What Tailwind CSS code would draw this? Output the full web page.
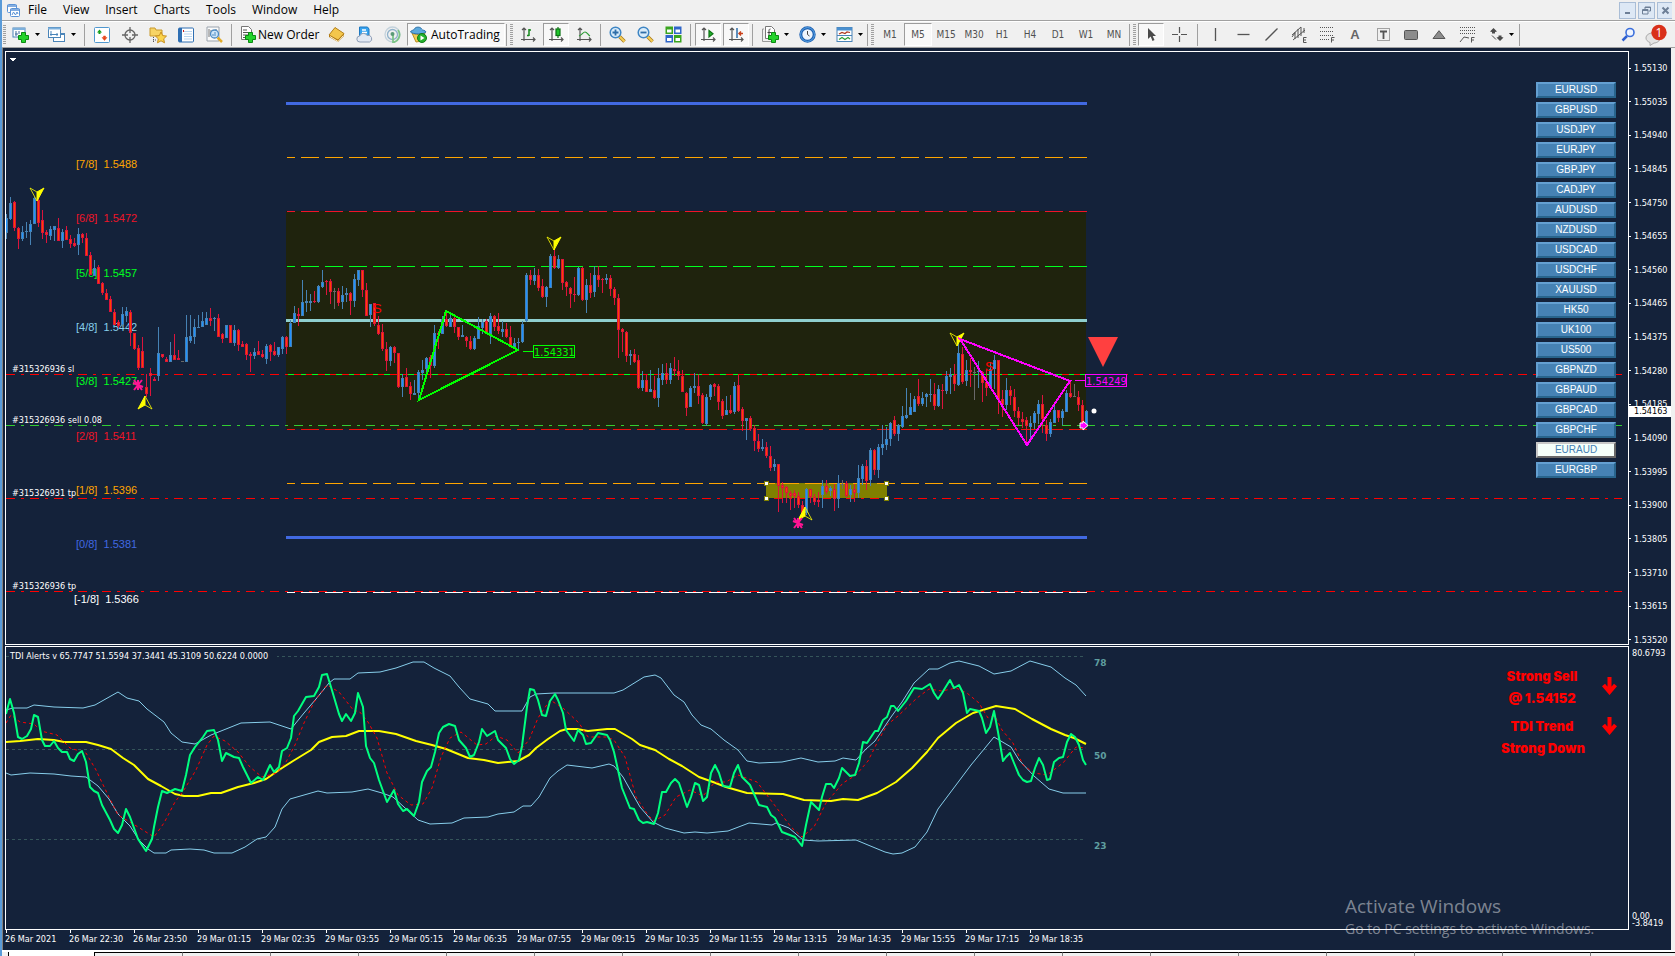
<!DOCTYPE html>
<html lang="en">
<head>
    <meta charset="UTF-8">
    <meta name="viewport" content="width=device-width, initial-scale=1.0">
    <title>EURAUD,M5</title>
    <script src="https://cdn.jsdelivr.net/npm/@tailwindcss/browser@4"></script>
</head>
<body class="h-screen overflow-hidden bg-[#f0f0f0] font-['Open_Sans',sans-serif] text-black">
<div class="flex h-full flex-col border-l-2 border-[#5a9bd8]">

    <!-- Menu bar -->
    <header class="flex h-[21px] shrink-0 items-center border-b border-[#a0a0a0] text-[12px] leading-[18px]">
        <svg class="ml-1 mr-[7px] size-[15px]" viewBox="0 0 15 15" fill="#fff" stroke="#5b93d6">
            <rect x="1.5" y="1.5" width="9" height="8" rx="1"/><rect x="4.5" y="5.5" width="9" height="8" rx="1"/>
            <path d="M1 3h10M4 7h10" stroke-width="1.6"/><path d="M6 12l1.500-3 2 3 1.500-3 1 2" fill="none"/>
        </svg>
        <nav class="flex gap-4">
            <button>File</button><button>View</button><button>Insert</button><button>Charts</button><button>Tools</button><button>Window</button><button>Help</button>
        </nav>
        <div class="ml-auto mr-[3px] flex gap-[2px]">
            <button aria-label="Minimize" class="flex h-[17px] w-[17px] items-center justify-center border border-[#a9bdd6] bg-[#dde8f5]"><svg class="size-[9px]" viewBox="0 0 9 9"><path d="M2 7h5" stroke="#6d7f96" stroke-width="2"/></svg></button>
            <button aria-label="Restore" class="flex h-[17px] w-[17px] items-center justify-center border border-[#a9bdd6] bg-[#dde8f5]"><svg class="size-[9px]" viewBox="0 0 9 9" fill="none" stroke="#6d7f96"><path d="M3 3V1h5.500v4H7M3 1.500h5.500"/><path d="M.5 3.500H6v4.500H.5zM.5 4.500H6"/></svg></button>
            <button aria-label="Close" class="flex h-[17px] w-[15px] items-center justify-center border border-r-0 border-[#a9bdd6] bg-[#dde8f5]"><svg class="size-[9px]" viewBox="0 0 9 9"><path d="M1.500 1.500l6 6M7.500 1.500l-6 6" stroke="#6d7f96" stroke-width="2"/></svg></button>
        </div>
    </header>

    <!-- Toolbar -->
    <div class="flex h-[27px] shrink-0 items-center border-t border-b border-t-white border-b-[#a0a0a0] text-[12px] [&>button]:flex [&>button]:h-[23px] [&>button]:shrink-0 [&>button]:items-center [&_svg]:shrink-0">
        <span class="w-[6px] shrink-0"><i class="ml-px block h-[20px] w-[3px] bg-[repeating-linear-gradient(#a0a0a0_0_1px,transparent_1px_2px)]"></i></span>
        <button aria-label="New chart" class="w-[36px] gap-[6px] pl-1">
            <svg class="size-[17px]" viewBox="0 0 17 17"><rect x="1" y="2" width="12" height="9" fill="#fff" stroke="#4a84b8"/><path d="M1 3h12" stroke="#7db0dc" stroke-width="2"/><path d="M4 5v5M6 8H3M7 5v3" stroke="#3f6d9a"/><path d="M9.500 6.500h4v3h3v4h-3v3h-4v-3h-3v-4h3z" fill="#23d32b" stroke="#0a8a12"/></svg>
            <svg class="h-[3px] w-[5px]" viewBox="0 0 5 3"><path d="M0 0h5L2.500 3z"/></svg>
        </button>
        <button aria-label="Profiles" class="w-[36px] gap-[6px] pl-1">
            <svg class="size-[17px]" viewBox="0 0 17 17" fill="#fff" stroke="#4a84b8"><rect x="5.500" y="7.500" width="11" height="8"/><path d="M5 8.500h11"/><rect x=".5" y="1.500" width="12" height="10"/><path d="M0 2.500h13" stroke="#7db0dc" stroke-width="2"/><path d="M3 5v5M2 8.500h8M9 7v3" fill="none"/></svg>
            <svg class="h-[3px] w-[5px]" viewBox="0 0 5 3"><path d="M0 0h5L2.500 3z"/></svg>
        </button>
        <span class="flex h-[22px] w-[8px] shrink-0 justify-center"><i class="w-px bg-[#a0a0a0]"></i></span>
        <button aria-label="Market Watch" class="w-[28px] justify-center"><svg class="size-[16px]" viewBox="0 0 16 16"><rect x=".5" y=".5" width="15" height="15" rx="1" fill="#fff" stroke="#4f97cf"/><path d="M5.500 2.500L8 5.500H6.500V7h-2V5.500H3z" fill="#17a01f"/><path d="M10.500 13.500L8 10.500h1.500V9h2v1.500H13z" fill="#e8481c" stroke="#e8481c" stroke-width=".5"/></svg></button>
        <button aria-label="Data Window" class="w-[28px] justify-center"><svg class="size-[16px]" viewBox="0 0 16 16" fill="none" stroke="#666" stroke-width="1.300"><circle cx="8" cy="8" r="5"/><path d="M8 0v6M8 10v6M0 8h6M10 8h6"/></svg></button>
        <button aria-label="Navigator" class="w-[28px] justify-center"><svg class="size-[18px]" viewBox="0 0 18 18"><path d="M1 2h5l1 2h6v6H1z" fill="#f7d465" stroke="#c99a2e"/><path d="M4.500 11v6M4 14h4" stroke="#555" stroke-dasharray="1 1"/><path d="M12 6l1.700 3.600 3.800.5-2.800 2.700.8 4-3.500-2-3.500 2 .8-4L6.500 10.100l3.800-.5z" fill="#fbd44c" stroke="#c88f1f"/></svg></button>
        <button aria-label="Terminal" class="w-[28px] justify-center"><svg class="size-[16px]" viewBox="0 0 16 16"><rect x=".5" y="1" width="15" height="14" rx="1" fill="#fff" stroke="#2f6fb3"/><path d="M2.500 1v14" stroke="#2f6fb3" stroke-width="3"/><path d="M6 4.500h8M6 7h8M6 9.500h8M6 12h8" stroke="#b9d5ef"/><path d="M5.500 3v2" stroke="#c22"/></svg></button>
        <button aria-label="Strategy Tester" class="w-[28px] justify-center"><svg class="size-[17px]" viewBox="0 0 17 17"><path d="M1 1h12v14H1z" fill="#fafafa" stroke="#9aa3ad"/><path d="M3 3v8M5 4v5M10 3v3" stroke="#777"/><path d="M11.500 11.500l4.500 4.500" stroke="#e0ab2b" stroke-width="2.500"/><circle cx="8.500" cy="8" r="4" fill="#cfe6f8" stroke="#4e8cc4" stroke-width="1.300"/><path d="M7 8v2M9 6v4" stroke="#4e8cc4"/></svg></button>
        <span class="flex h-[22px] w-[6px] shrink-0 justify-center"><i class="w-px bg-[#a0a0a0]"></i></span>
        <button class="w-[88px] gap-[2px] pl-[5px]">
            <svg class="size-[17px]" viewBox="0 0 17 17"><path d="M2.500.5h7l3 3v10h-10z" fill="#fff" stroke="#777"/><path d="M4 4h4M4 6.500h6M4 9h6M4 11.500h3" stroke="#555"/><path d="M9.500 6.500h4v3h3v4h-3v3h-4v-3h-3v-4h3z" fill="#23d32b" stroke="#0a8a12"/></svg>
            New Order
        </button>
        <button aria-label="MetaEditor" class="w-[28px] justify-center"><svg class="size-[17px]" viewBox="0 0 17 17"><path d="M1 9l6-7.500 9 6V10l-6 6-9-5z" fill="#b47a12"/><path d="M1 9l6-7.500 9 6-6 6.500z" fill="#f3c64c" stroke="#a97514" stroke-width=".8"/><path d="M2 10.500l8 5 5.500-6" fill="none" stroke="#fff3cf"/></svg></button>
        <button aria-label="Options" class="w-[28px] justify-center"><svg class="size-[17px]" viewBox="0 0 17 17"><path d="M3.500 1h8l1.500 2v8H3.500z" fill="#38a3ee" stroke="#1d78c1"/><path d="M6 4h4M6 6.500h5" stroke="#fff" stroke-width="1.400"/><path d="M4 16a3 3 0 01-.3-6A4 4 0 0111 9.500a3.200 3.200 0 012.500 6.500z" fill="#e3e9f3" stroke="#8e9db5"/></svg></button>
        <button aria-label="Signals" class="w-[28px] justify-center"><svg class="size-[17px]" viewBox="0 0 17 17" fill="none"><circle cx="8.500" cy="8.500" r="7.500" stroke="#c3d2dc" stroke-width="1.300"/><circle cx="8.500" cy="8.500" r="5" stroke="#8fb2ca" stroke-width="1.300"/><path d="M9 9v7.500A8 8 0 0014 4" stroke="#7cc487" stroke-width="1.800"/><circle cx="8.500" cy="8" r="2" fill="#5b9a78"/></svg></button>
        <button class="ml-px w-[98px] gap-1 border border-[#9c9c9c] border-r-white border-b-white bg-[#f8f8f8] pl-[2px]">
            <svg class="size-[17px]" viewBox="0 0 17 17"><path d="M2 7c2 2 11 2 13 0l-3 8-6 1z" fill="#f2cd55" stroke="#b98d21"/><path d="M.5 6C1 4 4 4.500 4.500 3 5 .5 11 .5 11.500 3c.5 1.500 4 1 4.500 3-2 2.500-13 2.500-15.500 0z" fill="#5ba9dd" stroke="#2d73ab"/><circle cx="12" cy="12" r="4.500" fill="#23b12d" stroke="#0e7c17"/><path d="M10.500 9.500l4 2.500-4 2.500z" fill="#fff"/></svg>
            AutoTrading
        </button>
        <span class="flex h-[22px] w-[9px] shrink-0 gap-[3px]"><i class="ml-px w-px bg-[#a0a0a0]"></i><i class="w-[3px] bg-[repeating-linear-gradient(#a0a0a0_0_1px,transparent_1px_2px)]"></i></span>
        <button aria-label="Bar chart" class="w-[28px] justify-center"><svg class="size-[15px]" viewBox="0 0 15 15" fill="none" stroke="#555" stroke-width="1.200"><path d="M3 1v13M1 3l2-2 2 2M0 12.500h14M12 10.500l2 2-2 2"/><path d="M8 2v7M8 3h2M6 8.500h2" stroke="#16891d" stroke-width="1.500"/></svg></button>
        <button aria-label="Candlesticks" class="mx-px w-[26px] justify-center border border-[#9c9c9c] border-r-white border-b-white bg-[#f8f8f8]"><svg class="size-[15px]" viewBox="0 0 15 15" fill="none" stroke="#555" stroke-width="1.200"><path d="M3 1v13M1 3l2-2 2 2M0 12.500h14M12 10.500l2 2-2 2"/><path d="M9 0v11" stroke="#0d7314"/><rect x="7" y="2" width="4" height="6.500" fill="#1fc62a" stroke="#0d7314"/></svg></button>
        <button aria-label="Line chart" class="w-[28px] justify-center"><svg class="size-[15px]" viewBox="0 0 15 15" fill="none" stroke="#555" stroke-width="1.200"><path d="M3 1v13M1 3l2-2 2 2M0 12.500h14M12 10.500l2 2-2 2"/><path d="M2 9c3-1 4-4 6-4s3 3 5 4" stroke="#2e9c36"/></svg></button>
        <span class="flex h-[22px] w-[5px] shrink-0 justify-center"><i class="w-px bg-[#a0a0a0]"></i></span>
        <button aria-label="Zoom in" class="w-[28px] justify-center"><svg class="size-[17px]" viewBox="0 0 17 17"><path d="M10.500 10.500l5 5" stroke="#a9791a" stroke-width="3.500"/><path d="M10.500 10.500l5 5" stroke="#f5cf56" stroke-width="2"/><circle cx="6.500" cy="6.500" r="5.300" fill="#d9ecfa" stroke="#3f86c4" stroke-width="1.500"/><path d="M3.500 6.500h6M6.500 3.500v6" stroke="#2f6ea8" stroke-width="1.800"/></svg></button>
        <button aria-label="Zoom out" class="w-[28px] justify-center"><svg class="size-[17px]" viewBox="0 0 17 17"><path d="M10.500 10.500l5 5" stroke="#a9791a" stroke-width="3.500"/><path d="M10.500 10.500l5 5" stroke="#f5cf56" stroke-width="2"/><circle cx="6.500" cy="6.500" r="5.300" fill="#d9ecfa" stroke="#3f86c4" stroke-width="1.500"/><path d="M3.500 6.500h6" stroke="#2f6ea8" stroke-width="1.800"/></svg></button>
        <button aria-label="Tile windows" class="w-[28px] justify-center"><svg class="size-[17px]" viewBox="0 0 17 17"><path d="M.5.5h7.500v7.500H.5zM9 9h7.500v7.500H9z" fill="#3aa51f"/><path d="M9 .5h7.500v7.500H9zM.5 9h7.500v7.500H.5z" fill="#2f66c9"/><path d="M2 3.500h4.500v3H2zM10.500 3.500H15v3h-4.500zM2 12h4.500v3H2zM10.500 12H15v3h-4.500z" fill="#fff"/></svg></button>
        <span class="flex h-[22px] w-[7px] shrink-0 justify-center"><i class="w-px bg-[#a0a0a0]"></i></span>
        <button aria-label="Auto scroll" class="mx-px w-[26px] justify-center border border-[#9c9c9c] border-r-white border-b-white bg-[#f8f8f8]"><svg class="size-[15px]" viewBox="0 0 15 15" fill="none" stroke="#555" stroke-width="1.200"><path d="M3 1v13M1 3l2-2 2 2M0 12.500h14M12 10.500l2 2-2 2"/><path d="M8 3.500v6.500l4-3.200z" fill="#22b42c" stroke="#0d7314"/></svg></button>
        <button aria-label="Chart shift" class="mx-px w-[26px] justify-center border border-[#9c9c9c] border-r-white border-b-white bg-[#f8f8f8]"><svg class="size-[15px]" viewBox="0 0 15 15" fill="none" stroke="#555" stroke-width="1.200"><path d="M3 1v13M1 3l2-2 2 2M0 12.500h14M12 10.500l2 2-2 2"/><path d="M8 1v10" stroke="#2d6ca8" stroke-width="1.500"/><path d="M14 6.500H10M12 4.500l-2 2 2 2" stroke="#c9401a" stroke-width="1.500"/></svg></button>
        <span class="flex h-[22px] w-[4px] shrink-0 justify-center"><i class="w-px bg-[#a0a0a0]"></i></span>
        <button aria-label="Indicators" class="w-[37px] gap-[5px] pl-2">
            <svg class="size-[17px]" viewBox="0 0 17 17"><path d="M3.500.5h6l3 3v9h-9z" fill="#fff" stroke="#777"/><path d="M2 3H.500v12.500H9" fill="none" stroke="#999"/><path d="M8.500 3C7 3 7 4 7 5v6M5.500 6.500h4" fill="none" stroke="#444"/><path d="M9.500 6.500h4v3h3v4h-3v3h-4v-3h-3v-4h3z" fill="#23d32b" stroke="#0a8a12"/></svg>
            <svg class="h-[3px] w-[5px]" viewBox="0 0 5 3"><path d="M0 0h5L2.500 3z"/></svg>
        </button>
        <button aria-label="Periods" class="w-[37px] gap-[5px] pl-2">
            <svg class="size-[17px]" viewBox="0 0 17 17"><circle cx="8.500" cy="8.500" r="6.700" fill="#eef5fc" stroke="#1c5fb0" stroke-width="3"/><circle cx="8.500" cy="8.500" r="6.900" fill="none" stroke="#5ea9ea" stroke-width="1"/><path d="M8.500 8.500V5M8.500 8.500l2 1.500" stroke="#444" fill="none"/></svg>
            <svg class="h-[3px] w-[5px]" viewBox="0 0 5 3"><path d="M0 0h5L2.500 3z"/></svg>
        </button>
        <button aria-label="Templates" class="w-[37px] gap-[5px] pl-2">
            <svg class="size-[17px]" viewBox="0 0 17 17"><rect x="1" y="1.500" width="15" height="14" fill="#fff" stroke="#4a84b8"/><path d="M1 3h15" stroke="#4a90d0" stroke-width="3"/><path d="M1 9.500h15" stroke="#4a84b8"/><path d="M3 8l3-1.500 3 1 2-1.500 3 .5" stroke="#b03a22" fill="none" stroke-width="1.200"/><path d="M3 13.500l3-2 3 2 3-2 2 1.500" stroke="#2e9c36" fill="none" stroke-width="1.200"/></svg>
            <svg class="h-[3px] w-[5px]" viewBox="0 0 5 3"><path d="M0 0h5L2.500 3z"/></svg>
        </button>
        <span class="flex h-[22px] w-[11px] shrink-0 gap-[3px]"><i class="ml-[2px] w-px bg-[#a0a0a0]"></i><i class="w-[3px] bg-[repeating-linear-gradient(#a0a0a0_0_1px,transparent_1px_2px)]"></i></span>
        <div class="flex shrink-0 font-['DejaVu_Sans_Condensed','DejaVu_Sans',sans-serif] text-[10px] text-[#505050] [&>button]:h-[23px] [&>button]:w-[28px]">
            <button>M1</button><button class="border border-[#9c9c9c] border-r-white border-b-white bg-[#f8f8f8]">M5</button><button>M15</button><button>M30</button><button>H1</button><button>H4</button><button>D1</button><button>W1</button><button>MN</button>
        </div>
        <span class="flex h-[22px] w-[9px] shrink-0 gap-[3px]"><i class="ml-px w-px bg-[#a0a0a0]"></i><i class="w-[3px] bg-[repeating-linear-gradient(#a0a0a0_0_1px,transparent_1px_2px)]"></i></span>
        <button aria-label="Cursor" class="mx-px w-[26px] justify-center border border-[#9c9c9c] border-r-white border-b-white bg-[#f8f8f8]"><svg class="size-[15px]" viewBox="0 0 15 15"><path d="M4 1v11l2.700-2.500L8.500 14l2-1-1.800-4H12z" fill="#4a4a4a"/></svg></button>
        <button aria-label="Crosshair" class="w-[28px] justify-center"><svg class="size-[15px]" viewBox="0 0 15 15" stroke="#555" stroke-width="1.200"><path d="M7.500 0v6M7.500 9v6M0 7.500h6M9 7.500h6"/></svg></button>
        <span class="flex h-[22px] w-[8px] shrink-0 justify-center"><i class="w-px bg-[#a0a0a0]"></i></span>
        <button aria-label="Vertical line" class="w-[28px] justify-center"><svg class="size-[15px]" viewBox="0 0 15 15" stroke="#555" stroke-width="1.300"><path d="M7.500 1v13"/></svg></button>
        <button aria-label="Horizontal line" class="w-[28px] justify-center"><svg class="size-[15px]" viewBox="0 0 15 15" stroke="#555" stroke-width="1.300"><path d="M1.500 7.500h12"/></svg></button>
        <button aria-label="Trendline" class="w-[28px] justify-center"><svg class="size-[15px]" viewBox="0 0 15 15" stroke="#555" stroke-width="1.300"><path d="M1.500 13.500l12-12"/></svg></button>
        <button aria-label="Equidistant channel" class="w-[28px] justify-center"><svg class="size-[17px]" viewBox="0 0 17 17" fill="none" stroke="#555"><path d="M1 9l9-8M2 14L14 4M4 6v7M7 3v9M10 1v9M13 2v5M1 11l3-4"/><path d="M15.500 11.500h-3v5h3M12.500 14h2.500"/></svg></button>
        <button aria-label="Fibonacci retracement" class="w-[28px] justify-center"><svg class="size-[17px]" viewBox="0 0 17 17" fill="none" stroke="#555"><path d="M1 1.500h14M1 5.500h14M1 9.500h14M1 13.500h9" stroke-dasharray="1 1"/><path d="M15.500 11.500h-3v5M12.500 14h2.500"/></svg></button>
        <button class="w-[28px] justify-center font-['Liberation_Sans',sans-serif] text-[13px] font-bold text-[#666]">A</button>
        <button class="w-[28px] justify-center" aria-label="Text label"><svg class="size-[15px]" viewBox="0 0 15 15" fill="none" stroke="#555"><rect x="1.500" y="1.500" width="12" height="12" stroke-dasharray="1 1"/><path d="M4 4.500h7M7.500 4.500v7.500" stroke-width="1.800"/></svg></button>
        <button aria-label="Rectangle" class="w-[28px] justify-center"><svg class="h-[10px] w-[14px]" viewBox="0 0 14 10"><rect x=".5" y=".5" width="13" height="9" rx="1" fill="#8c8c8c" stroke="#555"/></svg></button>
        <button aria-label="Triangle" class="w-[28px] justify-center"><svg class="h-[9px] w-[14px]" viewBox="0 0 14 9"><path d="M7 .7L13 8.500H1z" fill="#8c8c8c" stroke="#555"/></svg></button>
        <button aria-label="Fibonacci fan" class="w-[28px] justify-center"><svg class="size-[17px]" viewBox="0 0 17 17" fill="none" stroke="#555"><path d="M1 1.500h15M1 4.500h15M1 7.500h15" stroke-dasharray="1 1"/><path d="M1 16l4-5 5 1M15.500 11.500h-3v5M12.500 14h2.500"/></svg></button>
        <button aria-label="Arrows" class="w-[36px] gap-[5px] pl-2">
            <svg class="size-[15px]" viewBox="0 0 15 15" fill="#4a4a4a"><path d="M4.500 1L8 4.500l-2 .5v1.500H3V5L1 4.500zM11 14L7.500 10.500l2-.5V8.500h3V10l2 .5z"/><path d="M3 8.500l4 4" stroke="#4a4a4a"/></svg>
            <svg class="h-[3px] w-[5px]" viewBox="0 0 5 3"><path d="M0 0h5L2.500 3z"/></svg>
        </button>
        <span class="flex h-[22px] w-[4px] shrink-0 justify-center"><i class="w-px bg-[#a0a0a0]"></i></span>
        <button aria-label="Search" class="ml-auto w-[28px] justify-center"><svg class="size-[15px]" viewBox="0 0 15 15" fill="none"><path d="M6 9l-4.500 4.500" stroke="#2e5fd0" stroke-width="2.500"/><circle cx="9" cy="5.500" r="4" fill="#eef4ff" stroke="#3b6fdc" stroke-width="1.600"/></svg></button>
        <button aria-label="Notifications" class="mr-[5px] w-[28px] justify-center"><svg class="h-[22px] w-[22px]" viewBox="0 0 22 22"><path d="M1 14c0-3 3-5 7-5s7 2 7 5-3 5-6 5l-4 2.500v-3C2.500 17.500 1 16 1 14z" fill="#e4e4e4" stroke="#aaa"/><circle cx="14" cy="8.500" r="7.700" fill="#d9301a"/><text x="14" y="13" text-anchor="middle" font-family="Open Sans, sans-serif" font-size="12" fill="#fff">1</text></svg></button>
    </div>

    <!-- Chart window -->
    <main class="relative mr-1 grid min-h-0 flex-1 grid-cols-[minmax(0,1fr)_42px] grid-rows-[594fr_1px_284fr_20px] border-l border-[#808080] bg-[#14223a] pt-[3px] pl-[2px] font-['DejaVu_Sans_Condensed','DejaVu_Sans',sans-serif] text-[9px] text-white">

        <section class="grid overflow-hidden border border-white">
            <svg class="col-start-1 row-start-1 size-full" shape-rendering="crispEdges">
                <defs>
                    <g id="arrow-down" stroke="#ff0" shape-rendering="auto"><path d="M0 4l7-4-7 13z" fill="#ff0"/><path d="M0 4l-7-4 7 13" fill="none" stroke-opacity=".8"/></g>
                    <g id="arrow-up" stroke="#ff0" shape-rendering="auto"><path d="M0 9l-7 4L0 0z" fill="#ff0"/><path d="M0 9l7 4L0 0" fill="none" stroke-opacity=".8"/></g>
                    <path id="star" d="M0-5V5M-5-2L5 2M-4 5L4-5M4 5L-4-5" stroke="#ff1493" stroke-width="2" shape-rendering="auto"/>
                </defs>
                <g transform="translate(-6 -52)">
                    <path d="M9 58h7l-3 4z" fill="#fff"/>
                    <rect x="286" y="211" width="800" height="218" fill="#1f230d"/>
                    <rect x="766" y="483" width="121" height="15" fill="#808000"/>

                    <!-- order lines -->
                    <g stroke-dasharray="9 6 3 6">
                        <line x1="6" x2="100%" y1="374.500" y2="374.500" stroke="#f00"/>
                        <line x1="6" x2="100%" y1="425.500" y2="425.500" stroke="#32cd32"/>
                        <line x1="6" x2="100%" y1="498.500" y2="498.500" stroke="#f00"/>
                        <line x1="6" x2="100%" y1="591.500" y2="591.500" stroke="#f00"/>
                    </g>

                    <!-- Murrey levels -->
                    <path d="M286 103.500h801M286 537.500h801" stroke="#4169e1" stroke-width="3"/>
                    <path d="M286 320.500h801" stroke="#8fcfce" stroke-width="3"/>
                    <path d="M287 374.500h800" stroke="#f00"/>
                    <g stroke-dasharray="18 6" stroke-dashoffset="10">
                        <path d="M287 157.500h800" stroke="#ffa500"/>
                        <path d="M287 211.500h800" stroke="#f01428"/>
                        <path d="M287 266.500h800" stroke="#00ff20"/>
                        <path d="M287 429.500h800" stroke="#f01010"/>
                        <path d="M287 483.500h800" stroke="#ffa500"/>
                        <path d="M287 592.500h800" stroke="#fff"/>
                    </g>
                    <path d="M288 374.500h798" stroke="#00ff20" stroke-dasharray="6 7 5 6"/>
                    <g font-family="Liberation Sans, sans-serif" font-size="11">
                        <text x="76" y="168" fill="#ffa500">[7/8]&nbsp;&nbsp;1.5488</text>
                        <text x="76" y="222" fill="#f01428">[6/8]&nbsp;&nbsp;1.5472</text>
                        <text x="76" y="277" fill="#00ff20">[5/8]&nbsp;&nbsp;1.5457</text>
                        <text x="76" y="331" fill="#87ceeb">[4/8]&nbsp;&nbsp;1.5442</text>
                        <text x="76" y="385" fill="#00ff20">[3/8]&nbsp;&nbsp;1.5427</text>
                        <text x="76" y="440" fill="#f01428">[2/8]&nbsp;&nbsp;1.5411</text>
                        <text x="76" y="494" fill="#ffa500">[1/8]&nbsp;&nbsp;1.5396</text>
                        <text x="76" y="548" fill="#4169e1">[0/8]&nbsp;&nbsp;1.5381</text>
                        <text x="74" y="603" fill="#fff">[-1/8]&nbsp;&nbsp;1.5366</text>
                    </g>

                    <g id="candles"></g>

                    <g fill="#fff">
                        <text x="12" y="372">#315326936 sl</text>
                        <text x="12" y="423">#315326936 sell 0.08</text>
                        <text x="12" y="496">#315326931 tp</text>
                        <text x="12" y="589">#315326936 tp</text>
                    </g>

                    <use href="#arrow-down" x="37" y="188"/>
                    <use href="#arrow-down" x="554" y="237"/>
                    <use href="#arrow-down" x="957" y="333"/>
                    <use href="#arrow-up" x="145" y="396"/>
                    <use href="#arrow-up" x="805" y="507"/>
                    <use href="#star" x="138" y="385"/>
                    <use href="#star" x="798" y="523"/>
                    <g fill="#f00" font-family="Liberation Sans, sans-serif" font-size="13"><text x="373" y="313">S</text><text x="985" y="371">S</text></g>

                    <g fill="none" stroke-width="2">
                        <path d="M446 311L518 350L419 400z" stroke="#0f0"/>
                        <path d="M960 339L1070 381L1027 445z" stroke="#f0f"/>
                    </g>
                    <path d="M523 351.500h10M533.500 345.500h41v12h-41z" fill="none" stroke="#0f0"/>
                    <text x="534" y="356" font-size="11" fill="#0f0">1.54331</text>
                    <path d="M1075 380.500h10M1085.500 374.500h41v12h-41z" fill="none" stroke="#f0f"/>
                    <text x="1086" y="385" font-size="11" fill="#f0f">1.54249</text>

                    <g shape-rendering="auto">
                        <path d="M1088 337h30l-15 30z" fill="#ff4040"/>
                        <circle cx="1094" cy="411" r="2.500" fill="#fff"/>
                        <path d="M1080 423h3v-2l5 4.500-5 4.500v-2h-3z" fill="#f0f" stroke="#fff"/>
                    </g>
                    <g fill="#fff" stroke="#808000"><rect x="764.500" y="481.500" width="4" height="4"/><rect x="884.500" y="481.500" width="4" height="4"/><rect x="764.500" y="496.500" width="4" height="4"/><rect x="884.500" y="496.500" width="4" height="4"/></g>
                </g>
            </svg>
            <div id="symbols" class="col-start-1 row-start-1 mt-[30px] mr-3 flex w-20 flex-col gap-1 self-start justify-self-end font-['Liberation_Sans',sans-serif] text-[10px] leading-[12px]"></div>
        </section>
        <div id="prices" class="relative -mb-px flex flex-col justify-between pt-[11px] leading-[12px]">
            <span class="absolute inset-x-0 top-[355px] bg-white pl-[5px] leading-[11px] text-black">1.54163</span>
        </div>

        <section class="col-start-1 row-start-3 grid overflow-hidden border border-white">
            <svg class="col-start-1 row-start-1 size-full" fill="none">
                <g transform="translate(-6 -647)">
                    <g stroke="#35555a" stroke-dasharray="3 3" shape-rendering="crispEdges"><path d="M6 656.500h1078M6 749.500h1078M6 839.500h1078"/></g>
                    <g id="tdi" stroke-linejoin="round">
                        <polyline stroke="#87ceeb" points="6,710 13,708 27,708 34,705 54,707 83,708 95,705 118,692 127,698 139,701 147,709 164,722 171,733 182,742 195,744 211,735 221,731 241,723 270,722 291,729 304,713 316,699 329,683 334,679 350,679 358,673 380,672 396,668 413,662 424,662 434,668 450,676 459,687 470,699 488,704 495,711 522,711 530,697 536,694 554,693 571,693 614,693 623,690 644,677 655,675 661,678 674,695 684,702 692,715 701,725 711,729 724,740 738,750 747,761 759,763 782,762 801,758 818,762 835,761 843,758 856,760 866,749 875,741 891,717 902,702 914,683 929,669 938,669 950,663 959,661 979,666 994,674 1011,671 1030,661 1051,667 1065,678 1076,685 1086,696"/>
                        <polyline stroke="#87ceeb" points="6,773 11,775 30,773 54,774 71,776 86,777 98,786 109,799 118,814 130,826 139,840 148,849 154,853 166,853 171,850 190,849 204,850 214,853 232,853 245,847 257,839 266,837 275,827 282,809 290,799 318,791 327,793 352,792 368,789 382,793 393,797 404,807 418,820 430,824 452,823 464,818 488,817 498,814 514,812 523,806 531,806 539,797 550,778 558,771 567,765 592,768 609,764 614,766 623,777 632,793 640,807 653,822 665,828 684,833 695,832 707,833 728,831 749,823 772,825 776,823 789,828 803,840 818,841 856,840 868,845 885,852 893,854 902,853 915,847 927,832 938,809 956,785 971,765 994,737 1011,747 1019,760 1034,776 1049,789 1063,793 1086,793"/>
                        <polyline stroke="#ff0" stroke-width="2" points="6,742 20,741 38,739 54,740 64,742 86,742 98,745 111,749 123,758 134,765 148,779 161,786 175,794 184,796 198,796 211,793 221,793 238,787 254,783 266,779 282,768 293,761 311,750 319,742 332,737 346,736 359,731 379,731 396,734 416,741 432,745 446,749 468,758 484,760 498,763 518,761 529,755 536,748 548,739 560,731 567,729 577,729 588,731 607,729 615,729 632,739 640,745 655,750 669,759 682,766 699,777 713,782 726,787 747,793 783,794 804,800 831,801 843,799 858,800 877,793 896,782 912,768 927,752 938,738 956,723 973,713 996,706 1015,709 1032,719 1051,729 1065,735 1074,738 1086,744"/>
                        <polyline stroke="#f00" stroke-dasharray="3 3" points="6,723 11,715 20,722 34,724 41,731 57,735 70,748 86,753 96,770 107,793 118,815 130,822 146,832 154,837 164,823 175,802 184,790 196,770 207,745 214,736 225,741 238,752 250,767 262,777 277,773 286,762 295,745 304,723 314,702 327,685 339,692 354,711 359,711 368,722 377,738 387,773 398,795 411,805 423,804 432,788 441,757 450,738 461,732 477,745 486,744 496,736 507,740 518,753 529,740 538,718 550,700 563,708 579,723 588,737 607,737 614,740 625,757 636,797 648,815 654,821 665,815 676,797 690,790 703,796 715,782 726,782 738,775 757,782 776,807 791,827 802,837 814,827 826,803 843,783 856,775 868,761 877,743 887,725 898,716 917,698 929,689 942,691 956,688 967,693 979,703 988,718 995,716 1002,730 1013,743 1023,765 1034,773 1047,775 1063,763 1076,747 1086,748"/>
                        <polyline stroke="#00ff7f" stroke-width="2" points="6,714 10,699 14,713 18,737 22,739 27,736 31,729 34,715 38,717 42,740 45,746 50,746 54,741 58,748 62,752 67,752 70,759 74,761 78,754 82,751 86,762 90,787 94,791 98,793 102,805 110,820 114,829 118,833 122,825 126,809 130,817 138,839 146,851 152,839 154,827 158,807 162,791 167,793 175,789 182,791 186,775 190,755 195,747 203,737 207,731 214,730 218,740 222,761 226,753 234,757 239,758 243,767 251,783 258,777 263,780 270,765 274,772 279,767 282,751 287,748 291,738 294,716 298,711 306,697 314,696 319,687 322,675 327,674 331,687 339,714 342,721 346,714 351,721 355,713 358,693 363,707 366,746 370,758 374,763 379,780 387,802 390,797 394,790 398,804 403,811 407,809 414,816 419,802 422,782 427,771 431,767 435,752 439,733 443,727 449,724 455,726 459,740 466,748 470,757 474,755 479,742 482,729 487,736 495,731 498,740 506,748 510,759 514,764 519,760 522,746 527,707 530,689 534,690 538,700 542,715 546,716 550,701 555,694 558,700 563,713 566,730 574,741 578,730 583,735 586,744 591,743 598,733 607,735 610,740 614,752 622,788 630,808 634,809 639,820 643,823 647,822 654,824 658,813 662,792 666,792 671,783 675,779 679,783 687,807 691,797 695,783 699,785 703,801 707,797 711,773 715,765 719,773 723,786 730,787 734,773 738,765 742,777 750,785 759,805 767,807 771,815 775,818 782,832 795,837 802,846 806,825 811,802 819,810 822,797 826,784 831,784 834,788 839,778 842,768 850,776 855,775 859,763 863,742 867,743 875,731 878,731 883,720 887,717 891,706 894,706 898,711 906,701 914,688 922,689 930,684 934,693 938,699 942,693 950,680 954,688 959,685 963,693 967,713 970,709 979,711 982,718 986,733 990,727 994,711 998,732 1003,761 1006,757 1010,753 1014,763 1019,775 1023,780 1027,782 1031,781 1035,768 1039,758 1043,765 1047,780 1050,779 1054,762 1059,758 1063,757 1067,742 1071,734 1075,737 1079,745 1083,760 1086,765"/>
                    </g>
                    <rect x="9" y="650" width="268" height="12" fill="#14223a"/>
                    <text x="10" y="659" fill="#fff">TDI Alerts v 65.7747 51.5594 37.3441 45.3109 50.6224 0.0000</text>
                    <g fill="#5f9ea0" font-family="DejaVu Sans, sans-serif" font-weight="bold" font-size="9"><text x="1094" y="666">78</text><text x="1094" y="759">50</text><text x="1094" y="849">23</text></g>
                </g>
            </svg>
            <div class="col-start-1 row-start-1 mt-[18px] mr-[11px] grid grid-cols-[82px_15px] content-start gap-x-[19px] gap-y-[6px] justify-self-end text-center font-['Inter',sans-serif] text-[13px] leading-[22px] font-black whitespace-nowrap text-[#f00]">
                <p>Strong Sell<br>@ 1.54152</p>
                <svg class="mt-3 h-[18px] w-[15px]" viewBox="0 0 15 18" fill="none" stroke="#f00" stroke-width="4"><path d="M7.500 0v15M1.500 8l6 7 6-7"/></svg>
                <p>TDI Trend<br>Strong Down</p>
                <svg class="mt-[2px] h-[18px] w-[15px]" viewBox="0 0 15 18" fill="none" stroke="#f00" stroke-width="4"><path d="M7.500 0v15M1.500 8l6 7 6-7"/></svg>
            </div>
        </section>
        <div class="relative col-start-2 row-start-3 pt-px pl-[3px] leading-[12px]">
            <span>80.6793</span>
            <span class="absolute bottom-2 left-[3px]">0.00</span>
            <span class="absolute bottom-px left-[3px]">-3.8419</span>
        </div>

        <div id="times" class="col-span-2 row-start-4 flex overflow-hidden leading-[12px]"></div>

        <!-- Watermark -->
        <div class="pointer-events-none absolute right-[71px] bottom-3 w-[255px] whitespace-nowrap font-['Open_Sans',sans-serif] text-white/45">
            <p class="text-[19px] leading-[28px]">Activate Windows</p>
            <p class="text-[14px] leading-[18px]">Go to PC settings to activate Windows.</p>
        </div>
    </main>

    <!-- Chart tabs, mostly below the window edge -->
    <div id="tabs" class="flex h-[6px] shrink-0 overflow-hidden border-t-2 border-white"></div>
</div>

<script>
    // one entry per M5 bar: direction, high, body top, body bottom, low
    const BARS = `u214,218,233,239 u197,203,219,220 d201,202,228,231 d227,228,239,249 u226,232,239,241 u222,231,232,238 u220,224,232,245 u197,198,224,224 d197,200,223,227 d210,220,233,239
    d230,232,235,243 u226,229,236,240 u226,226,230,241 d218,228,241,241 u229,232,241,248 d226,230,240,240 d235,239,244,248 d238,243,246,247 u228,234,245,255 d233,234,238,243
    d233,238,256,256 d252,255,275,275 u260,268,276,276 d265,267,284,284 d282,283,293,295 d289,293,300,300 d296,299,312,312 d309,312,325,325 d320,322,326,328 u307,314,325,327
    u307,311,316,322 d310,312,333,346 d333,333,349,350 d345,348,368,370 d337,351,368,368 d374,387,394,397 d368,373,376,396 d377,379,381,381 u327,353,376,381 d354,354,357,358
    d357,359,362,362 u342,355,362,362 d334,355,360,360 d350,358,360,360 g361,361,362,362 u315,337,362,362 u315,336,341,343 u319,327,337,344 u315,327,328,328 u312,321,327,327
    u312,318,325,325 d308,318,321,326 u317,318,319,331 d314,318,337,337 d333,334,339,343 u325,325,338,338 d325,325,343,343 u325,330,343,346 d329,330,345,351 d341,344,347,347
    d343,344,355,360 d352,354,356,372 u348,352,356,359 d341,351,355,355 d350,354,357,358 u344,346,359,364 d344,345,352,361 d342,351,355,356 u347,347,355,357 u336,337,349,354
    d336,337,347,354 u320,323,347,347 u306,313,323,323 d308,314,316,326 u280,302,316,316 u290,301,303,312 u294,301,303,311 d291,301,302,303 u285,286,302,303 u270,282,287,288
    d280,281,282,295 d279,281,292,304 g288,291,292,309 d288,291,303,306 u286,295,302,309 u288,293,295,302 d292,293,301,315 u274,279,301,307 u270,270,280,286 d270,270,290,297
    d283,290,316,316 u304,304,315,327 d303,303,324,326 d316,325,334,335 d324,332,349,351 d342,349,361,371 u346,347,361,366 d346,347,353,363 d353,353,387,388 u374,378,387,397
    d368,377,387,387 d382,386,394,400 u380,393,395,395 u370,372,393,400 u360,370,373,380 u357,358,369,373 d355,357,366,378 u325,333,366,368 d331,333,335,349 u316,319,334,334
    d312,319,326,327 u313,318,327,327 d317,318,327,333 d327,327,337,340 u325,335,337,337 d336,337,341,347 d336,341,349,350 u336,338,349,350 u317,326,339,339 u319,322,328,334
    d319,321,334,334 u313,316,334,344 d315,316,327,331 d313,326,331,334 u321,329,332,337 d323,329,337,338 d326,337,346,347 u338,343,347,348 u338,342,343,349 u321,324,342,343
    u273,275,321,322 d270,275,280,285 u268,275,281,285 d269,275,288,291 d279,286,297,298 u286,287,297,307 u254,256,288,288 d249,256,268,269 u255,259,268,269 d259,259,283,290
    d281,282,287,296 d287,288,294,308 d277,294,295,302 u267,268,295,296 d267,268,300,301 u279,285,300,313 d273,285,293,298 u266,275,292,297 d266,275,280,287 d278,279,280,293
    u274,278,280,284 d275,278,289,296 d287,289,298,305 d294,298,330,358 d328,329,332,352 d331,332,356,362 u350,354,356,365 d349,354,362,363 d355,360,388,389 u371,380,388,391
    d374,380,392,392 u370,389,392,392 d376,390,398,399 u368,378,398,407 u364,373,380,385 d363,373,380,384 u363,368,380,384 d357,369,371,376 d360,371,376,380 d370,376,392,392
    d392,393,408,416 u386,388,407,407 u373,386,388,393 d374,386,396,404 d393,395,423,424 u394,397,424,426 u384,385,397,400 d383,384,387,396 d384,386,402,410 d399,401,416,419
    u396,410,415,415 d395,410,413,414 u382,386,412,414 d375,385,411,412 d407,409,421,431 u418,418,421,440 d416,418,429,431 d425,428,441,451 d434,441,449,452 u439,447,449,451
    d442,447,456,458 d446,456,468,471 u459,464,467,471 d464,464,486,512 d482,485,488,503 d486,487,493,503 d491,493,496,510 d490,493,496,508 d492,496,505,508 d501,505,513,513
    u488,489,513,515 d489,489,497,503 d494,497,502,505 d492,500,502,507 u480,486,495,508 d480,486,492,494 u486,488,491,496 d484,489,499,511 u475,483,499,508 g480,484,485,489
    d481,483,496,497 u485,489,495,502 d484,489,493,502 u465,478,493,498 u464,466,479,485 d460,466,481,490 u448,450,480,486 d449,450,470,475 u444,447,470,478 u425,444,448,455
    u427,439,445,450 u422,423,439,446 d416,420,434,436 u424,425,434,441 u406,416,427,428 u388,415,418,419 u393,407,415,415 u396,399,412,412 d379,396,404,406 u392,398,404,406
    u393,394,397,407 u379,394,395,402 d383,394,406,410 u385,389,406,407 d384,390,391,409 u371,376,391,394 u368,374,377,394 d364,375,384,391 u343,353,385,386 d347,354,382,384
    u360,370,381,386 d358,370,372,387 g367,372,373,400 u361,371,372,388 d371,372,383,402 d369,382,388,396 u362,369,387,389 u355,360,369,389 d360,360,400,414 d390,399,405,417
    u378,390,405,410 d386,390,396,405 d389,397,411,417 d407,411,418,425 d412,419,422,428 d417,420,426,444 u416,423,427,439 u411,413,423,429 u400,404,414,424 d395,404,419,433
    d420,425,434,441 u419,422,434,437 u406,410,423,423 d410,410,418,422 u409,411,418,425 u390,393,412,412 d382,393,397,398 g384,396,397,397 d391,397,405,411 d400,405,423,425
    u410,411,425,425`.trim().split(/\s+/);

    const COLORS = { u: ['#4682b4', '#1e90ff'], d: ['#dc143c', '#ff4500'], g: ['#696969', '#696969'] };

    document.getElementById('candles').innerHTML = BARS.map((bar, i) => {
        const [edge, fill] = COLORS[bar[0]];
        const [high, top, bottom, low] = bar.slice(1).split(',').map(Number);
        const x = 6 + i * 4;
        const h = Math.max(bottom - top, 1);
        return `<rect x="${x}" y="${high}" width="1" height="${low - high}" fill="${edge}"/>
                <rect x="${x - 1}" y="${top}" width="3" height="${h}" fill="${edge}"/>
                ${h > 2 ? `<rect x="${x}" y="${top + 1}" width="1" height="${h - 2}" fill="${fill}"/>` : ''}`;
    }).join('');

    const SYMBOLS = ['EURUSD', 'GBPUSD', 'USDJPY', 'EURJPY', 'GBPJPY', 'CADJPY', 'AUDUSD', 'NZDUSD', 'USDCAD', 'USDCHF',
        'XAUUSD', 'HK50', 'UK100', 'US500', 'GBPNZD', 'GBPAUD', 'GBPCAD', 'GBPCHF', 'EURAUD', 'EURGBP'];
    document.getElementById('symbols').innerHTML = SYMBOLS.map(s => s === 'EURAUD'
        ? `<button class="h-4 border-2 border-[#c8c8c8] border-r-[#696969] border-b-[#696969] bg-[#f5fffa] text-[#4682b4]">${s}</button>`
        : `<button class="h-4 border-2 border-[#64a0d2] border-r-[#28648c] border-b-[#28648c] bg-[#4682b4] text-white">${s}</button>`).join('');

    const PRICES = ['1.55130', '1.55035', '1.54940', '1.54845', '1.54750', '1.54655', '1.54560', '1.54465', '1.54375', '1.54280',
        '1.54185', '1.54090', '1.53995', '1.53900', '1.53805', '1.53710', '1.53615', '1.53520'];
    document.getElementById('prices').insertAdjacentHTML('afterbegin', PRICES.map(p =>
        `<span class="flex items-center gap-[3px]"><i class="h-px w-[2px] bg-white"></i>${p}</span>`).join(''));

    const TIMES = ['26 Mar 2021', '26 Mar 22:30', '26 Mar 23:50', '29 Mar 01:15', '29 Mar 02:35', '29 Mar 03:55', '29 Mar 05:15', '29 Mar 06:35', '29 Mar 07:55',
        '29 Mar 09:15', '29 Mar 10:35', '29 Mar 11:55', '29 Mar 13:15', '29 Mar 14:35', '29 Mar 15:55', '29 Mar 17:15', '29 Mar 18:35'];
    document.getElementById('times').innerHTML = TIMES.map(t =>
        `<span class="w-16 shrink-0 whitespace-nowrap"><i class="ml-px block h-[3px] w-px bg-white"></i>${t}</span>`).join('');

    document.getElementById('tabs').innerHTML = '<button aria-label="EURAUD,M5" class="ml-[6px] w-[87px] shrink-0 border-x border-black bg-white"></button>'
        + '<button aria-label="Chart tab" class="w-[88px] shrink-0 border-t border-r border-t-black border-r-[#808080]"></button>'.repeat(17)
        + '<span class="flex-1 border-t border-black"></span>';
</script>
</body>
</html>
